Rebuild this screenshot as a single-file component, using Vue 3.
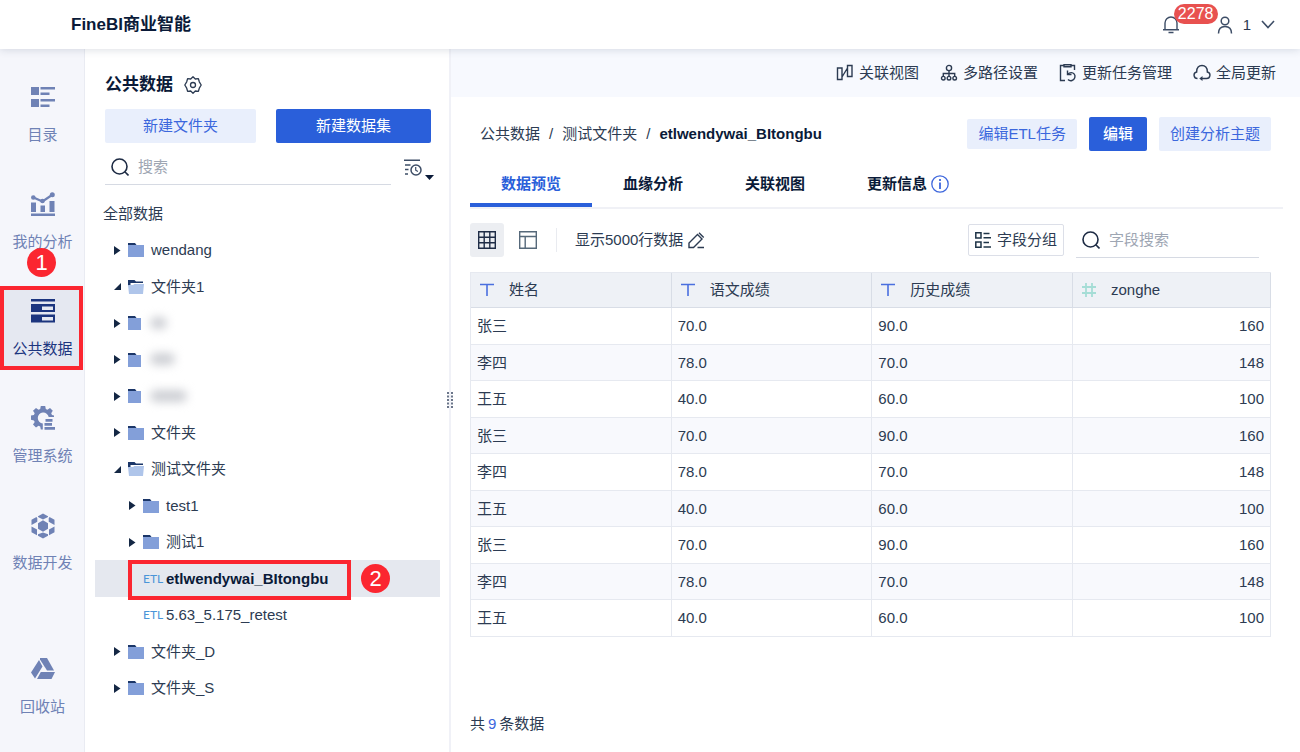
<script setup>
import { ref } from 'vue'

const navItems = [
  { label: '目录', icon: 'catalog' },
  { label: '我的分析', icon: 'chart' },
  { label: '公共数据', icon: 'data', active: true, mark: '1' },
  { label: '管理系统', icon: 'gear' },
  { label: '数据开发', icon: 'cubes' },
  { label: '回收站', icon: 'recycle', last: true },
]

const tree = [
  { name: 'wendang', kind: 'folder' },
  { name: '文件夹1', kind: 'open' },
  { kind: 'folder', masked: 17 },
  { kind: 'folder', masked: 25 },
  { kind: 'folder', masked: 37 },
  { name: '文件夹', kind: 'folder' },
  { name: '测试文件夹', kind: 'open' },
  { name: 'test1', kind: 'folder', child: true },
  { name: '测试1', kind: 'folder', child: true },
  { name: 'etlwendywai_BItongbu', kind: 'etl', child: true, selected: true },
  { name: '5.63_5.175_retest', kind: 'etl', child: true },
  { name: '文件夹_D', kind: 'folder' },
  { name: '文件夹_S', kind: 'folder' },
]

const actions = [
  { label: '关联视图', icon: 'relation' },
  { label: '多路径设置', icon: 'paths' },
  { label: '更新任务管理', icon: 'tasks' },
  { label: '全局更新', icon: 'global' },
]

const tabs = ['数据预览', '血缘分析', '关联视图', '更新信息']
const activeTab = ref('数据预览')

const columns = [
  { name: '姓名', type: 'text' },
  { name: '语文成绩', type: 'text' },
  { name: '历史成绩', type: 'text' },
  { name: 'zonghe', type: 'number' },
]
const people = [
  ['张三', '70.0', '90.0', 160],
  ['李四', '78.0', '70.0', 148],
  ['王五', '40.0', '60.0', 100],
]
const rows = [...people, ...people, ...people]

const keyword = ref('')
const fieldKeyword = ref('')
</script>

<template>
  <div class="app">
    <header class="header">
      <h1 class="brand">FineBI商业智能</h1>
      <div class="account">
        <button class="bell" aria-label="消息">
          <svg width="18" height="20" viewBox="0 0 18 20" fill="none" stroke="#3d4d66" stroke-width="1.4">
            <path d="M3 14.500V8a6 6 0 0 1 12 0v6.500M1 14.700h16M6.500 17.500h5" />
          </svg>
          <span class="count">2278</span>
        </button>
        <button class="user">
          <svg width="16" height="18" viewBox="0 0 16 18" fill="none" stroke="#3d4d66" stroke-width="1.5">
            <circle cx="8" cy="5" r="3.800" />
            <path d="M1.500 17.500c0-4.500 2.500-7 6.500-7s6.500 2.500 6.500 7" />
          </svg>
          <span>1</span>
          <svg width="14" height="9" viewBox="0 0 14 9" fill="none" stroke="#3d4d66" stroke-width="1.6">
            <path d="M1 1l6 6.500L13 1" />
          </svg>
        </button>
      </div>
    </header>

    <div class="body">
      <nav class="nav">
        <a
          v-for="item in navItems"
          :key="item.label"
          href="#"
          class="nav-item"
          :class="{ active: item.active, last: item.last }"
        >
          <svg v-if="item.icon === 'catalog'" width="24" height="24" viewBox="0 0 24 24" fill="currentColor">
            <path d="M0 2h8v8H0zM0 14h8v8H0zM9.500 2H24v2.500H9.500zM9.500 7.500h9V10h-9zM9.500 14H24v2.500H9.500zM9.500 19.500h9V22h-9z" />
          </svg>
          <svg v-else-if="item.icon === 'chart'" width="24" height="24" viewBox="0 0 24 24" fill="currentColor">
            <path d="M0 21.500h24V24H0zM0 10.500h5V20H0zM9.500 13.500H14V20H9.500zM18.500 9H23.500v11h-5z" />
            <path d="M2.500 5.500l9 4 9.500-6.500" fill="none" stroke="currentColor" stroke-width="2.200" />
            <circle cx="2.300" cy="5.500" r="2.300" /><circle cx="11.500" cy="9" r="2.300" /><circle cx="21.300" cy="2.700" r="2.500" />
          </svg>
          <svg v-else-if="item.icon === 'data'" width="24" height="24" viewBox="0 0 24 24" fill="currentColor">
            <path d="M0 0h24v2.500H0z" />
            <path fill-rule="evenodd" d="M0 5h24v8H0zM11 7.500v3.500h11V7.500zM0 15.500h24v8H0zM11 18v3.500h11V18z" />
          </svg>
          <svg v-else-if="item.icon === 'gear'" width="24" height="24" viewBox="0 0 24 24" fill="currentColor">
            <path d="M9.800 0h4.400l.6 3 1.600.7 2.600-1.700 2.800 2.800-1.600 2.500.8 1.700 2 .6V11h-5.300a5.500 5.500 0 1 0-5.900 6.500v6H9.800l-.6-3-1.700-.7L5 21.500 2 18.600l1.700-2.500-.8-1.700L0 13.800V9.600L2.900 9l.8-1.700L2 4.800 5 2l2.500 1.700L9.200 3z" />
            <path d="M14.500 13h7v2.800h-7zM13.500 17h7.500v2.800h-7.500zM13.500 21H24v2.800H13.500z" />
          </svg>
          <svg v-else-if="item.icon === 'cubes'" width="26" height="26" viewBox="0 0 26 26" fill="currentColor">
            <path d="M13 7.300l5 2.900v5.600l-5 2.900-5-2.900v-5.600z" />
            <path d="M13 .5l5 2.700v.8l-5 2.500L8 4v-.8zM13 25.500l5-2.700v-1.600l-5-1.700-5 1.700v1.600z" />
            <path d="M6.500 4l.800 1.200v3.500L1.500 12V6.800zM19.500 4l-.8 1.200v3.500l5.800 3.300V6.800zM1.500 13.500l5.500 3v5.800l-5.500-3zM24.500 13.500l-5.500 3v5.800l5.500-3z" />
          </svg>
          <svg v-else width="24" height="24" viewBox="0 0 24 24" fill="currentColor">
            <path d="M9 1h7l7 12.500h-7L9 2.500z" />
            <path d="M8 3l3.500 6.500-7.500 12L0 15.500zM9.800 15H24l-3.500 7H6z" />
          </svg>
          <span class="nav-label">{{ item.label }}</span>
          <b v-if="item.mark" class="mark mark-nav">{{ item.mark }}</b>
        </a>
      </nav>

      <aside class="panel">
        <div class="panel-title">
          <h2>公共数据</h2>
          <button class="plain" aria-label="设置">
            <svg width="18" height="18" viewBox="0 0 18 18" fill="none" stroke="#2c3b52" stroke-width="1.3" stroke-linejoin="round">
              <path d="M9 .8l2.300 2.200 3.100-.3.900 3.100L17.200 9l-1.900 3.200-.9 3.100-3.100-.3L9 17.200 6.700 15l-3.100.3-.9-3.100L.8 9l1.900-3.200.9-3.100 3.100.3z" />
              <circle cx="9" cy="9" r="2.500" />
            </svg>
          </button>
        </div>
        <div class="panel-buttons">
          <button class="btn light">新建文件夹</button>
          <button class="btn primary">新建数据集</button>
        </div>
        <div class="panel-search">
          <label class="search">
            <svg width="18" height="18" viewBox="0 0 18 18" fill="none" stroke="#1d2b44" stroke-width="1.6">
              <circle cx="8.500" cy="8.500" r="7.500" /><path d="M13.800 13.800l3.700 3.700" />
            </svg>
            <input v-model="keyword" type="text" placeholder="搜索" aria-label="搜索" />
          </label>
          <button class="plain sort" aria-label="排序">
            <svg width="18" height="17" viewBox="0 0 18 17" fill="none" stroke="#3d4d66" stroke-width="1.5">
              <path d="M0 1.200h16M1 6h5.500M1 10.500h3.500M1 15h3" />
              <circle cx="12" cy="11" r="5" /><path d="M11.700 8v3.200l2.200 1.300" stroke-width="1.200" />
            </svg>
            <svg class="caret" width="9" height="5" viewBox="0 0 9 5" fill="#0a1a38"><path d="M0 0h9L4.500 5z" /></svg>
          </button>
        </div>
        <div class="all">全部数据</div>
        <ul class="tree">
          <li v-for="(node, i) in tree" :key="i" :class="{ child: node.child, selected: node.selected }">
            <span class="arrow">
              <svg v-if="node.kind === 'folder'" width="7" height="9" viewBox="0 0 7 9" fill="#142744"><path d="M0 0l6.500 4.500L0 9z" /></svg>
              <svg v-else-if="node.kind === 'open'" width="7" height="7" viewBox="0 0 7 7" fill="#142744"><path d="M7 0v7H0z" /></svg>
            </span>
            <span v-if="node.kind === 'etl'" class="etl">ETL</span>
            <svg v-else-if="node.kind === 'folder'" class="folder" width="16" height="14" viewBox="0 0 16 14">
              <path d="M0 0h7l1.500 2H16v2H0z" fill="#1b3668" /><path d="M0 2h16v12H0z" fill="#839fd9" />
            </svg>
            <svg v-else class="folder" width="16" height="14" viewBox="0 0 16 14">
              <path d="M0 0h6.500L8 1.500h7V6H0z" fill="#1b3668" /><path d="M2.500 3H15v2H2.500z" fill="#fff" />
              <path d="M0 5h5l1.500-1H16l-1 10H1z" fill="#afc5ea" />
            </svg>
            <span v-if="node.masked" class="masked"><i :style="{ width: node.masked + 'px' }"></i></span>
            <span v-else class="node-name">{{ node.name }}</span>
            <template v-if="node.selected">
              <span class="frame"></span>
              <b class="mark mark-tree">2</b>
            </template>
          </li>
        </ul>
        <svg class="grip" width="7" height="16" viewBox="0 0 7 16" fill="#6b768a">
          <path d="M0 0h2v2H0zM4 0h2v2H4zM0 3.500h2v2H0zM4 3.500h2v2H4zM0 7h2v2H0zM4 7h2v2H4zM0 10.500h2v2H0zM4 10.500h2v2H4zM0 14h2v2H0zM4 14h2v2H4z" />
        </svg>
      </aside>

      <main class="main">
        <div class="actions">
          <button v-for="a in actions" :key="a.label" class="plain action">
            <svg width="18" height="18" viewBox="0 0 18 18" fill="none" stroke="#2c3b52" stroke-width="1.4">
              <path v-if="a.icon === 'relation'" d="M1.500 4h4.500v11.500H1.500zM11.500 1.500H16v11h-4.500zM6 13l5.500-9" />
              <g v-else-if="a.icon === 'paths'">
                <circle cx="9" cy="4" r="2.600" /><circle cx="3.300" cy="14.200" r="1.800" /><circle cx="9" cy="14.200" r="1.800" /><circle cx="14.700" cy="14.200" r="1.800" />
                <path d="M9 6.600v5.800M3.300 12.400V9.500h11.400v2.900" />
              </g>
              <g v-else-if="a.icon === 'tasks'">
                <path d="M6 16.500H1.500v-15h3.500M12 1.500h3.500V6M5 .7h7v2H5z" />
                <path d="M8.500 6.500v4h4M8.800 10.200c2-2.300 5-2 6.500 0s.5 5.500-2.300 6.300c-1.500.4-3 0-4-1" />
              </g>
              <g v-else>
                <path d="M4.500 14.500C.5 14.500-.3 8.800 3.700 8 3.500 3.500 6 1.500 9 1.500s5.500 2 5.300 6.500c4 .8 3.200 6.500-.8 6.500H8.500" />
                <path d="M9.500 12v5l-3.200-2.500z" fill="#2c3b52" stroke="none" />
              </g>
            </svg>
            {{ a.label }}
          </button>
        </div>

        <div class="content">
          <div class="title-row">
            <div class="crumbs">
              <a href="#">公共数据</a><span>/</span><a href="#">测试文件夹</a><span>/</span><b>etlwendywai_BItongbu</b>
            </div>
            <div class="title-buttons">
              <button class="btn light small">编辑ETL任务</button>
              <button class="btn primary strong">编辑</button>
              <button class="btn light">创建分析主题</button>
            </div>
          </div>

          <div class="tabs">
            <button
              v-for="t in tabs"
              :key="t"
              class="tab"
              :class="{ on: t === activeTab }"
              @click="activeTab = t"
            >
              {{ t }}
              <svg v-if="t === '更新信息'" width="18" height="18" viewBox="0 0 18 18" fill="none" stroke="#3f68dd" stroke-width="1.300">
                <circle cx="9" cy="9" r="8.200" /><path d="M9 7.500V14M9 4v2" stroke-width="1.800" />
              </svg>
            </button>
          </div>

          <div class="tools">
            <button class="plain view on" aria-label="表格视图">
              <svg width="18" height="18" viewBox="0 0 18 18" fill="none" stroke="#1f2d47" stroke-width="1.400">
                <path d="M.7.700h16.600v16.600H.7zM6.200.700v16.600M11.800.700v16.600M.7 6.200h16.600M.7 11.800h16.600" />
              </svg>
            </button>
            <button class="plain view" aria-label="结构视图">
              <svg width="18" height="18" viewBox="0 0 18 18" fill="none" stroke="#56697a" stroke-width="1.400">
                <path d="M.7.700h16.600v16.600H.7zM.7 5.500h16.600M6.200 5.500v11.800" />
              </svg>
            </button>
            <span class="divider"></span>
            <span class="limit">显示5000行数据</span>
            <button class="plain" aria-label="编辑行数">
              <svg width="17" height="17" viewBox="0 0 17 17" fill="none" stroke="#2c3b52" stroke-width="1.400">
                <path d="M1 15.500v-4.500L9.500 2.500l4.500 4.500-8.500 8.500zM9.500 15.500h6.500M11 .800l4.700 4.700" />
              </svg>
            </button>
            <span class="spacer"></span>
            <button class="group">
              <svg width="16" height="16" viewBox="0 0 16 16" fill="none" stroke="#1f3447" stroke-width="1.500">
                <path d="M.8.800H6V6H.8zM.8 10H6v5.200H.8zM8.500 1.500h6M8.500 5.800H16M8.500 10.500H14M8.500 15H16" />
              </svg>
              字段分组
            </button>
            <label class="search field">
              <svg width="18" height="18" viewBox="0 0 18 18" fill="none" stroke="#1d2b44" stroke-width="1.600">
                <circle cx="8.500" cy="8.500" r="7.500" /><path d="M13.800 13.800l3.700 3.700" />
              </svg>
              <input v-model="fieldKeyword" type="text" placeholder="字段搜索" aria-label="字段搜索" />
            </label>
          </div>

          <table class="grid">
            <thead>
              <tr>
                <th v-for="c in columns" :key="c.name" scope="col">
                  <span class="th">
                    <svg v-if="c.type === 'text'" width="14" height="14" viewBox="0 0 14 14" fill="none" stroke="#4a6fdf" stroke-width="1.600">
                      <path d="M0 1.500h14M7 1.500V13" />
                    </svg>
                    <svg v-else width="14" height="14" viewBox="0 0 14 14" fill="none" stroke="#a5ddd6" stroke-width="1.800">
                      <path d="M0 4h14M0 10h14M4 0v14M10 0v14" />
                    </svg>
                    {{ c.name }}
                  </span>
                </th>
              </tr>
            </thead>
            <tbody>
              <tr v-for="(r, i) in rows" :key="i">
                <td v-for="(v, j) in r" :key="j" :class="{ num: j === 3 }">{{ v }}</td>
              </tr>
            </tbody>
          </table>

          <footer class="total">共<em>9</em>条数据</footer>
        </div>
      </main>
    </div>
  </div>
</template>

<style>
body {
  margin: 0;
}
</style>

<style scoped>
* {
  box-sizing: border-box;
}
.app {
  display: flex;
  flex-direction: column;
  min-height: 100vh;
  background: #fff;
  color: #2c3b52;
  font-family: "Liberation Sans", "Noto Sans CJK SC", sans-serif;
  font-size: 15px;
  line-height: 20px;
}
svg {
  flex: none;
  display: block;
}
button {
  font: inherit;
  color: inherit;
  border: 0;
  padding: 0;
  cursor: pointer;
}
a {
  color: inherit;
  text-decoration: none;
}
.plain {
  display: flex;
  align-items: center;
  background: none;
}
.header {
  position: relative;
  z-index: 1;
  display: flex;
  align-items: center;
  justify-content: space-between;
  height: 49px;
  padding: 0 25px 0 71px;
  background: #fff;
  box-shadow: 0 1px 8px rgba(40, 55, 90, 0.16);
}
.brand {
  margin: 0;
  font-size: 17px;
  color: #0a1a38;
}
.account {
  display: flex;
  align-items: center;
  gap: 37px;
}
.bell {
  position: relative;
  background: none;
}
.count {
  position: absolute;
  left: 12px;
  top: -11px;
  width: 44px;
  border-radius: 10px;
  background: #e8514f;
  color: #fff;
  font-size: 16px;
  text-align: center;
}
.user {
  display: flex;
  align-items: center;
  gap: 10px;
  background: none;
}
.body {
  display: flex;
  flex: 1;
}
.nav {
  display: flex;
  flex-direction: column;
  gap: 23px;
  flex: none;
  width: 85px;
  padding: 23px 1px 24px 0;
  background: #f5f6fb;
  border-right: 1px solid #e9ebf2;
  color: #6f82b5;
}
.nav-item {
  position: relative;
  display: flex;
  flex-direction: column;
  align-items: center;
  height: 84px;
  padding: 13px 0 11px 2px;
  justify-content: space-between;
}
.nav-item.last {
  margin-top: auto;
}
.nav-item.active {
  color: #1c357f;
  background: #e5e8f1;
  outline: 4px solid #fb2630;
  outline-offset: -4px;
}
.nav-label {
  white-space: nowrap;
}
.mark {
  position: absolute;
  width: 29px;
  height: 29px;
  border-radius: 50%;
  background: #fb2630;
  color: #fff;
  font-size: 22px;
  font-weight: 400;
  line-height: 29px;
  text-align: center;
}
.mark-nav {
  left: 27px;
  top: -38px;
}
.mark-tree {
  left: 266px;
  top: 4px;
}
.panel {
  position: relative;
  flex: none;
  width: 366px;
  padding: 20px 9px 0 10px;
  border-right: 2px solid #f0f1f7;
}
.panel-title {
  display: flex;
  align-items: center;
  gap: 11px;
  height: 32px;
  padding-left: 10px;
}
.panel-title h2 {
  margin: 0;
  font-size: 17px;
  color: #0a1a38;
}
.panel-buttons {
  display: flex;
  gap: 20px;
  padding: 8px 9px 0 10px;
}
.panel-buttons .light {
  width: 151px;
}
.panel-buttons .primary {
  flex: 1;
}
.btn {
  height: 34px;
  padding: 0 11px;
  border-radius: 2px;
  white-space: nowrap;
}
.btn.light {
  background: #e9effc;
  color: #3b67dd;
}
.btn.primary {
  background: #2a5fda;
  color: #fff;
}
.btn.small {
  height: 30px;
}
.btn.strong {
  padding: 0 14px;
  font-weight: 500;
}
.panel-search {
  display: flex;
  gap: 13px;
  padding: 7px 1px 0 10px;
}
.search {
  display: flex;
  align-items: center;
  gap: 9px;
  flex: 1;
  height: 35px;
  padding-left: 6px;
  border-bottom: 1px solid #d6dae3;
}
.search input {
  flex: 1;
  min-width: 0;
  padding: 0;
  border: 0;
  outline: 0;
  background: none;
  font: inherit;
  color: inherit;
}
.search input::placeholder {
  color: #9ea6b3;
  opacity: 1;
}
.sort {
  gap: 3px;
  padding-right: 5px;
}
.caret {
  align-self: flex-end;
  margin-bottom: 5px;
}
.all {
  margin-top: 10px;
  padding-left: 8px;
  line-height: 37px;
}
.tree {
  margin: 0;
  padding: 0;
  list-style: none;
}
.tree li {
  position: relative;
  display: flex;
  align-items: center;
  height: 36px;
  padding-left: 19px;
}
.tree li:nth-child(even) {
  height: 37px;
}
.tree li.child {
  padding-left: 34px;
}
.tree li.selected {
  background: #e5e8ef;
  color: #0a1a38;
  font-weight: 700;
}
.arrow {
  flex: none;
  width: 14px;
}
.node-name {
  margin-left: 7px;
}
.etl {
  flex: none;
  width: 23px;
  color: #4a95d8;
  font: 12px/20px Lato, "Liberation Sans", sans-serif;
  white-space: nowrap;
}
.etl + .node-name {
  margin-left: 0;
}
.masked {
  align-self: stretch;
  margin-left: -3px;
  padding: 12px 12px 0 9px;
  background: #fff;
}
.masked i {
  display: block;
  height: 12px;
  border-radius: 6px;
  background: #cdcfd4;
  filter: blur(5px);
}
.frame {
  position: absolute;
  left: 33px;
  top: 0;
  width: 223px;
  height: 40px;
  border: 4px solid #fb2630;
}
.grip {
  position: absolute;
  right: -5px;
  top: 343px;
}
.main {
  display: flex;
  flex-direction: column;
  flex: 1;
  min-width: 0;
}
.actions {
  display: flex;
  justify-content: flex-end;
  gap: 21px;
  height: 48px;
  padding-right: 24px;
  background: #f7f9fe;
}
.action {
  gap: 5px;
}
.content {
  display: flex;
  flex-direction: column;
  flex: 1;
  padding: 20px 29px 16px 19px;
}
.title-row {
  display: flex;
  align-items: center;
  justify-content: space-between;
  padding-left: 10px;
}
.crumbs {
  display: flex;
  gap: 9px;
}
.crumbs b {
  color: #0a1a38;
}
.title-buttons {
  display: flex;
  align-items: center;
  gap: 12px;
}
.tabs {
  display: flex;
  margin: 12px -12px 0 0;
  border-bottom: 2px solid #f0f1f6;
}
.tab {
  display: flex;
  align-items: center;
  justify-content: center;
  gap: 4px;
  width: 122px;
  height: 44px;
  border-top: 2px solid transparent;
  border-bottom: 4px solid transparent;
  background: none;
  color: #0a1a38;
  font-weight: 700;
}
.tab.on {
  color: #2a5fda;
  border-bottom-color: #2a5fda;
}
.tab:last-child {
  width: 144px;
}
.tools {
  display: flex;
  align-items: center;
  height: 34px;
  margin-top: 14px;
}
.view {
  justify-content: center;
  width: 34px;
  height: 34px;
  margin-right: 7px;
  border-radius: 3px;
}
.view.on {
  background: #eceef2;
}
.divider {
  width: 1px;
  height: 24px;
  margin: 0 18px 0 4px;
  background: #e9ebf0;
}
.limit {
  margin-right: 5px;
}
.spacer {
  flex: 1;
}
.group {
  display: flex;
  align-items: center;
  gap: 6px;
  height: 32px;
  padding: 0 6px;
  border: 1px solid #dcdfe8;
  border-radius: 2px;
  background: #fff;
}
.search.field {
  flex: none;
  width: 183px;
  margin: 0 12px 0 12px;
}
.grid {
  width: 100%;
  margin-top: 15px;
  table-layout: fixed;
  border-collapse: separate;
  border-spacing: 0;
  border: solid #e6e9f0;
  border-width: 1px 0 0 1px;
}
.grid th,
.grid td {
  height: 37px;
  padding: 0 6px;
  border: solid #e6e9f0;
  border-width: 0 1px 1px 0;
  text-align: left;
  font-weight: 400;
}
.grid th {
  height: 35px;
  padding-left: 9px;
  background: #eef1f6;
  border-color: #d8dde6;
}
.grid th:last-child {
  width: 198px;
}
.grid tbody tr:nth-child(even) td {
  height: 36px;
  background: #f8f9fd;
}
.grid td.num {
  text-align: right;
}
.th {
  display: flex;
  align-items: center;
  gap: 15px;
}
.total {
  margin-top: auto;
  padding-top: 24px;
  line-height: 24px;
}
.total em {
  margin: 0 3px;
  color: #3b67dd;
  font-style: normal;
}
</style>
